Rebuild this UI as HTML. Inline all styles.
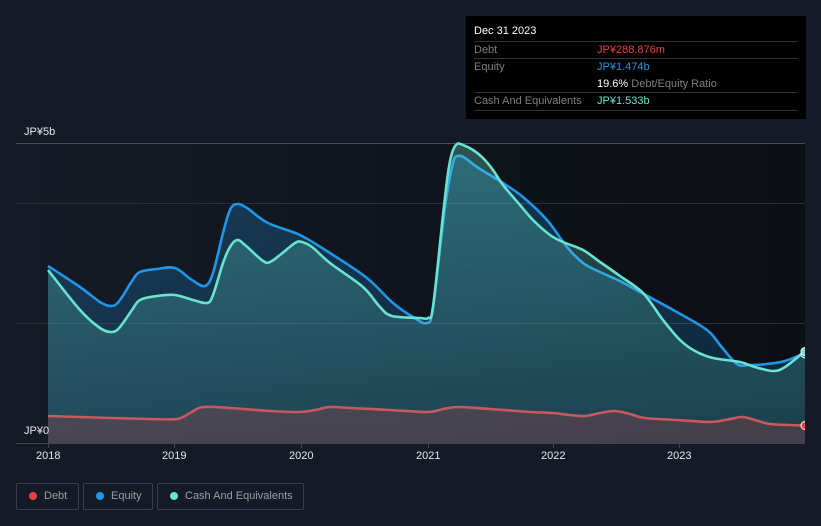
<!DOCTYPE html>
<html><head><meta charset="utf-8">
<style>
html,body{margin:0;padding:0;background:#151b26;}
body{width:821px;height:526px;overflow:hidden;position:relative;font-family:"Liberation Sans","Noto Sans CJK JP",sans-serif;}
svg{position:absolute;left:0;top:0}
.t{position:absolute;left:466px;top:16px;width:340px;height:103px;background:#000;}
.t div{position:absolute;font-size:11px;line-height:14px;white-space:nowrap;color:#7f7f7f}
.t i{position:absolute;left:8px;width:324px;height:1px;background:#333}
.lg{position:absolute;top:483px;height:25px;border:1px solid #3a404b;border-radius:2px;font-size:11px;line-height:25px;color:#9b9ea5;box-sizing:content-box}
.lg b{position:absolute;top:8px;width:8px;height:8px;border-radius:50%}
.lg span{position:absolute;top:0;white-space:nowrap}
.lb{position:absolute;color:#e6e7e9;font-size:11px;line-height:14px;white-space:nowrap}
</style></head><body>
<svg width="821" height="526" viewBox="0 0 821 526">
<defs>
<linearGradient id="bg" x1="0" x2="1" y1="0" y2="0"><stop offset="0" stop-color="#151b26"/><stop offset="1" stop-color="#0b0e13"/></linearGradient>
<linearGradient id="cf" x1="0" x2="0" y1="144" y2="443" gradientUnits="userSpaceOnUse"><stop offset="0" stop-color="#68e3cf" stop-opacity=".31"/><stop offset="1" stop-color="#68e3cf" stop-opacity=".13"/></linearGradient>
<linearGradient id="ef" x1="0" x2="0" y1="144" y2="443" gradientUnits="userSpaceOnUse"><stop offset="0" stop-color="#2196e6" stop-opacity=".27"/><stop offset="1" stop-color="#2196e6" stop-opacity=".17"/></linearGradient>
<clipPath id="cp"><rect x="16" y="130" width="789" height="330"/></clipPath>
</defs>
<rect x="16" y="143" width="789" height="300" fill="url(#bg)"/>
<rect x="16" y="143" width="789" height="1" fill="#4a4d55"/>
<rect x="16" y="203" width="789" height="1" fill="#2c3038"/>
<rect x="16" y="323" width="789" height="1" fill="#2c3038"/>
<path id="ea" fill="url(#ef)"/>
<g clip-path="url(#cp)"><path id="el" fill="none" stroke="#2196e6" stroke-width="2.6" stroke-linejoin="round"/></g>
<path id="ca" fill="url(#cf)"/>
<g clip-path="url(#cp)"><path id="cl" fill="none" stroke="#68e3cf" stroke-width="2.6" stroke-linejoin="round"/></g>
<path id="da" fill="#e64141" fill-opacity=".2"/>
<rect x="16" y="443" width="789" height="1" fill="#41454e"/>
<g fill="#41454e">
<rect x="48" y="443" width="1" height="5"/><rect x="174" y="443" width="1" height="5"/><rect x="301" y="443" width="1" height="5"/><rect x="428" y="443" width="1" height="5"/><rect x="553" y="443" width="1" height="5"/><rect x="679" y="443" width="1" height="5"/>
</g>
<g clip-path="url(#cp)">
<path id="dl" fill="none" stroke="#c9585f" stroke-width="2.6" stroke-linejoin="round"/>
<circle cx="805" cy="354" r="4" fill="#2196e6" stroke="#fff"/>
<circle cx="805" cy="351.500" r="4" fill="#68e3cf" stroke="#fff"/>
<circle cx="805" cy="425.500" r="4" fill="#e64141" stroke="#fff"/>
</g>
</svg>
<div class="lb" style="left:24px;top:125px">JP¥5b</div>
<div class="lb" style="left:24px;top:424px">JP¥0</div>
<div class="lb" style="left:36px;top:449px;width:24px;text-align:center">2018</div>
<div class="lb" style="left:162px;top:449px;width:24px;text-align:center">2019</div>
<div class="lb" style="left:289px;top:449px;width:24px;text-align:center">2020</div>
<div class="lb" style="left:416px;top:449px;width:24px;text-align:center">2021</div>
<div class="lb" style="left:541px;top:449px;width:24px;text-align:center">2022</div>
<div class="lb" style="left:667px;top:449px;width:24px;text-align:center">2023</div>
<div class="t">
<div style="left:8px;top:8px;color:#fff">Dec 31 2023</div>
<i style="top:25px"></i>
<div style="left:8px;top:27px">Debt</div><div style="left:131px;top:27px;color:#e64141">JP¥288.876m</div>
<i style="top:42px"></i>
<div style="left:8px;top:44px">Equity</div><div style="left:131px;top:44px;color:#2196e6">JP¥1.474b</div>
<div style="left:131px;top:61px"><span style="color:#fff">19.6%</span> Debt/Equity Ratio</div>
<i style="top:76px"></i>
<div style="left:8px;top:78px">Cash And Equivalents</div><div style="left:131px;top:78px;color:#68e3cf">JP¥1.533b</div>
<i style="top:94px"></i>
</div>
<div class="lg" style="left:16px;width:61px"><b style="left:12px;background:#e64141"></b><span style="left:27px">Debt</span></div>
<div class="lg" style="left:83px;width:68px"><b style="left:12px;background:#2196e6"></b><span style="left:27px">Equity</span></div>
<div class="lg" style="left:157px;width:145px"><b style="left:12px;background:#68e3cf"></b><span style="left:27px">Cash And Equivalents</span></div>
<script>
var E=[[48,266],[80,287],[100,302],[112,306],[120,300],[132,281],[140,272],[157,269],[175,268],[192,280],[205,286],[213,273],[223,233],[230,210],[237,204],[247,208],[268,223],[300,235],[333,255],[367,278],[393,303],[413,317],[427,323],[433,307],[445,207],[453,163],[458,156],[465,158],[477,167],[490,175],[503,183],[523,197],[547,220],[567,247],[583,263],[600,272],[620,281],[640,292],[675,311],[707,330],[720,345],[737,364],[750,365],[767,364],[785,361],[805,353]];
var C=[[48,270],[80,310],[100,328],[112,332],[120,327],[132,310],[140,300],[157,296],[175,295],[193,300],[207,303],[213,295],[223,263],[230,247],[237,240],[245,245],[263,261],[270,262],[280,255],[295,243],[302,242],[312,247],[330,263],[363,287],[380,307],[392,316],[420,318],[428,318],[433,307],[443,215],[448,173],[452,153],[457,144],[463,145],[473,150],[483,158],[493,170],[503,185],[520,205],[533,220],[550,235],[563,242],[583,250],[600,262],[620,276],[643,293],[663,320],[680,340],[695,351],[713,358],[740,362],[755,367],[773,371],[785,367],[805,351]];
var D=[[48,416],[80,417],[110,418],[150,419],[177,419],[190,413],[203,407],[230,408],[270,411],[300,412],[315,410],[330,407],[350,408],[390,410],[428,412],[443,409],[458,407],[490,409],[530,412],[553,413],[570,415],[585,416],[600,413],[615,411],[630,414],[645,418],[677,420],[710,422],[725,420],[742,417],[755,420],[770,424],[790,425],[805,425.500]];
function p(a){var s="M"+a[0][0]+","+a[0][1];for(var i=0;i<a.length-1;i++){var p0=a[i?i-1:0],p1=a[i],p2=a[i+1],p3=a[i+2]||p2;
var k=1/6;s+="C"+(p1[0]+(p2[0]-p0[0])*k).toFixed(1)+","+(p1[1]+(p2[1]-p0[1])*k).toFixed(1)+" "+(p2[0]-(p3[0]-p1[0])*k).toFixed(1)+","+(p2[1]-(p3[1]-p1[1])*k).toFixed(1)+" "+p2[0]+","+p2[1];}return s;}
function set(n,a){var l=p(a);document.getElementById(n+"l").setAttribute("d",l);document.getElementById(n+"a").setAttribute("d",l+"L805,443L48,443Z");}
set("e",E);set("c",C);set("d",D);
</script>
</body></html>
